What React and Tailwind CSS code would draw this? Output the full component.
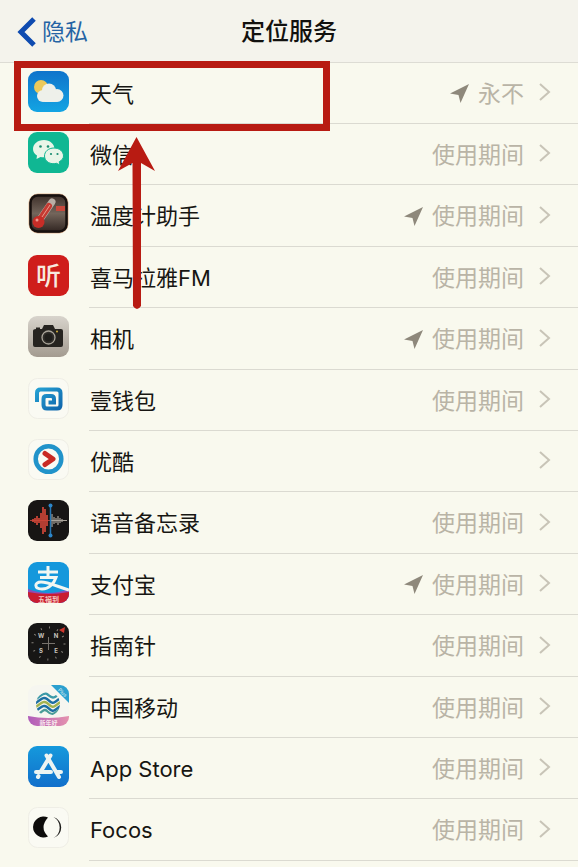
import { clsx } from "clsx";

const WeatherIcon = () => (
  <>
    <defs>
      <linearGradient id="weather" x1="0" y1="0" x2="0" y2="1">
        <stop offset="0" stopColor="#0f74cb" />
        <stop offset="1" stopColor="#13a4e3" />
      </linearGradient>
    </defs>
    <rect width="41" height="41" rx="9" fill="url(#weather)" />
    <circle cx="13" cy="16" r="7" fill="#ecc95a" />
    <g fill="#eef0ea">
      <circle cx="15" cy="25" r="6" />
      <circle cx="21" cy="19.500" r="7" />
      <circle cx="29" cy="24.500" r="6.500" />
      <rect x="14" y="22" width="16" height="9" rx="3" />
    </g>
  </>
);

const WechatIcon = () => (
  <>
    <rect width="41" height="41" rx="9" fill="#10b793" />
    <path d="M16 8C9.500 8 5 12 5 17c0 3 1.500 5 4 6.500L8.500 27l4-2c7 1.500 14-2 14-8 0-5-4.500-9-10.500-9z" fill="#e9f5e8" />
    <path d="M26 16c-5.500 0-9.500 3.500-9.500 8 0 5.500 6 9 12 7.300L32 33l-.8-3.200C34 28 35.500 26.500 35.500 24c0-4.500-4-8-9.500-8z" fill="#e9f5e8" stroke="#10b793" strokeWidth="1" />
    <g fill="#178c70">
      <circle cx="12.500" cy="14.500" r="1.300" />
      <circle cx="20" cy="14.500" r="1.300" />
      <circle cx="23" cy="22" r="1.100" />
      <circle cx="29.500" cy="22" r="1.100" />
    </g>
  </>
);

const ThermometerIcon = () => (
  <>
    <defs>
      <linearGradient id="thermo" x1="0" y1="0" x2="0" y2="1">
        <stop offset="0" stopColor="#3a2c26" />
        <stop offset="0.5" stopColor="#73655b" />
        <stop offset="1" stopColor="#2c211d" />
      </linearGradient>
    </defs>
    <rect x="1" y="1" width="39" height="39" rx="9" fill="url(#thermo)" stroke="#e5b895" strokeWidth="1" />
    <rect x="2.500" y="2.500" width="36" height="36" rx="7" fill="none" stroke="#17100e" strokeWidth="2.500" />
    <path d="M11 28L24 9" stroke="#b9aea5" strokeWidth="7" strokeLinecap="round" />
    <path d="M11 28L21 13" stroke="#c43a32" strokeWidth="6" strokeLinecap="round" />
    <circle cx="10.500" cy="29" r="6" fill="#c72d27" />
    <circle cx="9" cy="27" r="1.500" fill="#ee9a8e" />
    <path d="M28 13h9v5h-9z" fill="#c8483c" />
    <path d="M14 24L22 12" stroke="#eb9b8c" strokeWidth="1" />
  </>
);

const ListenIcon = () => (
  <>
    <rect width="41" height="41" rx="9" fill="#cf1d1b" />
    <text x="20.500" y="29.500" textAnchor="middle" fontSize="25" fontWeight="500" fill="#f7e9df">听</text>
  </>
);

const CameraIcon = () => (
  <>
    <defs>
      <linearGradient id="camera" x1="0" y1="0" x2="0" y2="1">
        <stop offset="0" stopColor="#d8d4cc" />
        <stop offset="1" stopColor="#a39b90" />
      </linearGradient>
    </defs>
    <rect width="41" height="41" rx="9" fill="url(#camera)" />
    <path d="M8 11.500h4v1.500h2l2-4h9l2 4h6q2 0 2 2v14q0 2-2 2H7q-2 0-2-2V15q0-2 3-2z" fill="#262420" />
    <circle cx="20.500" cy="21.500" r="6.500" fill="#302e2a" stroke="#a9a499" strokeWidth="1.300" />
    <circle cx="20.500" cy="21.500" r="4" fill="#1f1e1b" />
    <circle cx="29" cy="15.500" r="1" fill="#d2b03c" />
  </>
);

const WalletIcon = () => (
  <>
    <defs>
      <linearGradient id="wallet" x1="0" y1="0" x2="1" y2="1">
        <stop offset="0" stopColor="#249fd2" />
        <stop offset="1" stopColor="#1067ad" />
      </linearGradient>
    </defs>
    <rect x="0.500" y="0.500" width="40" height="40" rx="9" fill="#fafaf3" stroke="#efeee6" />
    <path
      d="M9 24V15q0-3.500 3.500-3.500H29q3.500 0 3.500 3.500v12q0 3.500-3.500 3.500H19q-3.500 0-3.500-3.500v-6q0-3 3-3H23q3 0 3 3v3.500h-5.500"
      fill="none"
      stroke="url(#wallet)"
      strokeWidth="4"
    />
  </>
);

const YoukuIcon = () => (
  <>
    <rect x="0.500" y="0.500" width="40" height="40" rx="9" fill="#fafaf3" stroke="#efeee6" />
    <circle cx="20.500" cy="20" r="12.800" fill="none" stroke="#2193ca" strokeWidth="4.500" />
    <path d="M17 14.500l8 5.500-8 5.500" fill="none" stroke="#c82a24" strokeWidth="5" strokeLinecap="round" strokeLinejoin="round" />
  </>
);

const VoiceMemoIcon = () => (
  <>
    <rect width="41" height="41" rx="9" fill="#171514" />
    <path d="M2 20.500h20" stroke="#a94337" />
    <path
      d="M5 19v3M7 18v5M9 16v9M11 18v5M13 13v15M15 7v27M17 9v23M19 15v11"
      stroke="#cf4638"
      strokeWidth="1.700"
    />
    <path d="M24 14v13M26 17v7M28 18v5M30 16v9M32 18v5M34 19v3" stroke="#aaa49b" strokeWidth="1.200" />
    <path d="M22 20.500h17" stroke="#aaa49b" />
    <path d="M22.500 5v31" stroke="#2778b5" strokeWidth="1.500" />
    <circle cx="22.500" cy="5.500" r="2" fill="#2c86c9" />
    <circle cx="22.500" cy="35.500" r="2" fill="#2c86c9" />
  </>
);

const AlipayIcon = () => (
  <>
    <defs>
      <clipPath id="alipayClip">
        <rect width="41" height="41" rx="9" />
      </clipPath>
    </defs>
    <g clipPath="url(#alipayClip)">
      <rect width="41" height="41" fill="#1598dc" />
      <path d="M0 27q20 8 41 0v14H0z" fill="#8d4db5" />
      <path d="M0 30q20 4 41 0v11H0z" fill="#c91d31" />
      <path
        d="M10 10h20M20 4v11M12 15.500h16c-2 6-7 11.500-14 11.500-8 0-8-7-1-7 7 0 15 4 28 8"
        fill="none"
        stroke="#f2f7f2"
        strokeWidth="3"
      />
      <text x="20.500" y="39.500" textAnchor="middle" fontSize="7" fontWeight="700" fill="#f3c6bd">五福到</text>
    </g>
  </>
);

const CompassIcon = () => (
  <>
    <rect width="41" height="41" rx="9" fill="#171615" />
    <circle cx="20.500" cy="20.500" r="16" fill="none" stroke="#85817a" strokeWidth="2" strokeDasharray="1 7.380" />
    <path d="M20.500 14v13M14 20.500h13" stroke="#77736d" />
    <path d="M31 7l6-3-1 6z" fill="#cf372e" />
    <g fontSize="6" fontWeight="700" fill="#c9c5bd" textAnchor="middle">
      <text x="13" y="15">W</text>
      <text x="28" y="15">N</text>
      <text x="13" y="30">S</text>
      <text x="28" y="30">E</text>
    </g>
  </>
);

const ChinaMobileIcon = () => (
  <>
    <defs>
      <clipPath id="mobileClip">
        <rect width="41" height="41" rx="9" />
      </clipPath>
      <clipPath id="mobileDisc">
        <circle cx="20" cy="19" r="12" />
      </clipPath>
      <linearGradient id="mobileBand">
        <stop offset="0" stopColor="#b05cba" />
        <stop offset="1" stopColor="#e592ae" />
      </linearGradient>
    </defs>
    <g clipPath="url(#mobileClip)">
      <rect width="41" height="41" fill="#f6f6f0" />
      <path d="M23 0h18v18z" fill="#2ba0cf" />
      <text x="34" y="9" fontSize="5" fill="#e4f3f3" textAnchor="middle" transform="rotate(45 34 8)">Plus</text>
      <g clipPath="url(#mobileDisc)" fill="none" strokeWidth="2.400">
        <path d="M8 14c6-4 8-7 11-5s4 5 8 3 4-3 7-5" stroke="#3d9aa8" />
        <path d="M6 19c7-4 9-8 13-5s5 5 8 3 5-4 8-6" stroke="#1d6fa2" />
        <path d="M6 23c7-4 9-8 13-5s5 5 8 3 5-4 8-6" stroke="#a3b350" />
        <path d="M6 27c7-4 9-8 13-5s5 5 8 3 5-4 8-6" stroke="#1d6fa2" />
        <path d="M8 31c6-4 8-8 11-5s5 4 8 2 4-3 7-5" stroke="#4a9c98" />
      </g>
      <path d="M0 31q20 4 41 0v10H0z" fill="url(#mobileBand)" />
      <text x="20.500" y="39.500" textAnchor="middle" fontSize="6" fontWeight="700" fill="#f8e9ef">新年好</text>
    </g>
  </>
);

const AppStoreIcon = () => (
  <>
    <defs>
      <linearGradient id="appstore" x1="0" y1="0" x2="0" y2="1">
        <stop offset="0" stopColor="#1599dc" />
        <stop offset="1" stopColor="#116fcb" />
      </linearGradient>
    </defs>
    <rect width="41" height="41" rx="9" fill="url(#appstore)" />
    <path
      d="M22.500 9.500L12.500 26M18.500 9.500L31 31M8 26h15M29 26h4M10 31l.5-1"
      fill="none"
      stroke="#edf4f2"
      strokeWidth="4"
      strokeLinecap="round"
    />
  </>
);

const FocosIcon = () => (
  <>
    <rect x="0.500" y="0.500" width="40" height="40" rx="9" fill="#fafaf3" stroke="#efeee6" />
    <path d="M20 10.500a10.500 10.500 0 1 0 0 19q-9-9 0-19z" fill="#0d0c0b" />
    <path d="M25.500 10a11 11 0 0 1 0 21a12 12 0 0 0 0-21z" fill="#1c1b19" />
  </>
);

const apps = [
  { name: "天气", icon: WeatherIcon, status: "永不", located: true },
  { name: "微信", icon: WechatIcon, status: "使用期间" },
  { name: "温度计助手", icon: ThermometerIcon, status: "使用期间", located: true },
  { name: "喜马拉雅FM", icon: ListenIcon, status: "使用期间" },
  { name: "相机", icon: CameraIcon, status: "使用期间", located: true },
  { name: "壹钱包", icon: WalletIcon, status: "使用期间" },
  { name: "优酷", icon: YoukuIcon },
  { name: "语音备忘录", icon: VoiceMemoIcon, status: "使用期间" },
  { name: "支付宝", icon: AlipayIcon, status: "使用期间", located: true },
  { name: "指南针", icon: CompassIcon, status: "使用期间" },
  { name: "中国移动", icon: ChinaMobileIcon, status: "使用期间" },
  { name: "App Store", icon: AppStoreIcon, status: "使用期间" },
  { name: "Focos", icon: FocosIcon, status: "使用期间" },
];

const LocationArrow = () => (
  <svg width="20" height="20" viewBox="0 0 20 20" className="shrink-0" aria-hidden="true">
    <path d="M19 0L0 9.500l8.500 1.500L10.500 19z" fill="#8e887b" />
  </svg>
);

const AppRow = ({ app, index }) => {
  const Icon = app.icon;
  const tall = index % 5 === 2 || index % 5 === 4;

  return (
    <li className={clsx("flex", tall ? "h-[62px]" : "h-[61px]")}>
      <a href="#" className="flex flex-1 items-start gap-5 pl-7">
        <svg width="41" height="41" viewBox="0 0 41 41" className="mt-2 shrink-0" aria-hidden="true">
          <Icon />
        </svg>
        <span className="flex h-full flex-1 items-center border-b border-[#dbdad1] pt-0.5 pr-6 pl-px">
          <span className="flex-1 text-[22px] text-[#171612]">{app.name}</span>
          {app.located && <LocationArrow />}
          <span className="ml-2 text-[23px] text-[#b9b4a6]">{app.status}</span>
          <svg width="16" height="22" viewBox="0 0 16 22" className="mb-1 ml-3.5 shrink-0" aria-hidden="true">
            <path d="M2 3l9 8-9 8" fill="none" stroke="#c8c4b7" strokeWidth="2" />
          </svg>
        </span>
      </a>
    </li>
  );
};

// Red frame and arrow pointing at the first row
const Callout = () => (
  <>
    <div className="pointer-events-none absolute top-[61px] left-3.5 h-[70px] w-[316px] border-[7px] border-[#b81b12]" />
    <svg
      width="38"
      height="174"
      viewBox="0 0 38 174"
      className="pointer-events-none absolute top-[137px] left-[118px]"
      aria-hidden="true"
    >
      <path d="M18.500 0L37 34l-14-8L23 169q-4 6-8 0L14.500 26 0 34z" fill="#b81b12" />
    </svg>
  </>
);

export default function App() {
  return (
    <div className="relative min-h-screen bg-[#f9f9ee] font-[Inter,'Noto_Sans_CJK_SC',sans-serif]">
      <header className="grid h-[63px] grid-cols-3 items-center border-b border-[#dddcd4] bg-[#f4f3ec] pt-0.5">
        <a href="#" className="flex items-center gap-1.5 pl-4 text-[23px] text-[#2563a4]">
          <svg width="20" height="30" viewBox="0 0 20 30" aria-hidden="true">
            <path d="M18 2L5 15l13 13" fill="none" stroke="#0f4bb0" strokeWidth="5" />
          </svg>
          隐私
        </a>
        <h1 className="text-center text-[24px] font-medium text-[#12110f]">定位服务</h1>
      </header>

      <ul>
        {apps.map((app, index) => (
          <AppRow key={app.name} app={app} index={index} />
        ))}
      </ul>

      <Callout />
    </div>
  );
}
